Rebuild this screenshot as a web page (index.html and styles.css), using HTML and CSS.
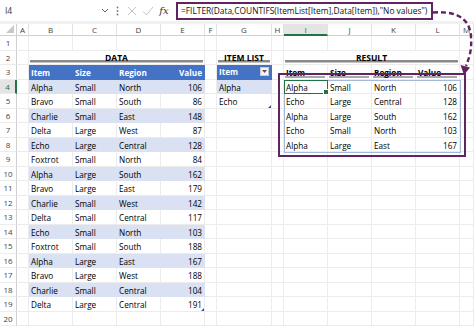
FILE: index.html
```html
<!DOCTYPE html>
<html>
<head>
<meta charset="utf-8">
<link rel="stylesheet" href="styles.css">
</head>
<body>
<div class="fbar">
  <div class="namebox">I4</div>
  <div class="ico chev"><svg width="8" height="5" viewBox="0 0 8 5"><path d="M1 1l3 3 3-3" fill="none" stroke="#666" stroke-width="1"/></svg></div>
  <div class="ico dots"><svg width="3" height="10" viewBox="0 0 3 10"><circle cx="1.5" cy="1.5" r="0.9" fill="#777"/><circle cx="1.5" cy="5" r="0.9" fill="#777"/><circle cx="1.5" cy="8.5" r="0.9" fill="#777"/></svg></div>
  <div class="ico"><svg width="10" height="10" viewBox="0 0 10 10"><path d="M1 1l8 8M9 1l-8 8" fill="none" stroke="#c4c4c4" stroke-width="1"/></svg></div>
  <div class="ico"><svg width="12" height="10" viewBox="0 0 12 10"><path d="M1 5.5l3.5 3.5L11 1" fill="none" stroke="#c4c4c4" stroke-width="1"/></svg></div>
  <div class="ico fx">fx</div>
  <div class="formula">=FILTER(Data,COUNTIFS(ItemList[Item],Data[Item]),"No values")</div>
</div>

<div class="sheet">
  <div class="corner"><span class="tri"></span></div><div class="ch">A</div><div class="ch">B</div><div class="ch">C</div><div class="ch">D</div><div class="ch">E</div><div class="ch">F</div><div class="ch">G</div><div class="ch">H</div><div class="ch sel">I</div><div class="ch">J</div><div class="ch">K</div><div class="ch">L</div><div class="ch">M</div>

  <div class="rh">1</div><div class="c"></div><div class="c"></div><div class="c"></div><div class="c"></div><div class="c"></div><div class="c"></div><div class="c"></div><div class="c"></div><div class="c"></div><div class="c"></div><div class="c"></div><div class="c"></div><div class="c"></div>

  <div class="rh">2</div><div class="c"></div><div class="c title span4">DATA</div><div class="c"></div><div class="c title">ITEM LIST</div><div class="c"></div><div class="c title span4">RESULT</div><div class="c"></div>

  <div class="rh">3</div><div class="c"></div><div class="c th">Item</div><div class="c th">Size</div><div class="c th">Region</div><div class="c th num">Value</div><div class="c"></div><div class="c th drop">Item<span class="dd"><svg width="5" height="3" viewBox="0 0 5 3"><path d="M0 0h5L2.5 3z" fill="#555"/></svg></span></div><div class="c"></div><div class="c rth">Item</div><div class="c rth">Size</div><div class="c rth">Region</div><div class="c rth">Value</div><div class="c"></div>

  <div class="rh sel">4</div><div class="c"></div><div class="c band">Alpha</div><div class="c band">Small</div><div class="c band">North</div><div class="c band num">106</div><div class="c"></div><div class="c band">Alpha</div><div class="c"></div><div class="c active">Alpha</div><div class="c">Small</div><div class="c">North</div><div class="c num">106</div><div class="c"></div>

  <div class="rh">5</div><div class="c"></div><div class="c">Bravo</div><div class="c">Small</div><div class="c">South</div><div class="c num">86</div><div class="c"></div><div class="c handle">Echo</div><div class="c"></div><div class="c">Echo</div><div class="c">Large</div><div class="c">Central</div><div class="c num">128</div><div class="c"></div>

  <div class="rh">6</div><div class="c"></div><div class="c band">Charlie</div><div class="c band">Small</div><div class="c band">East</div><div class="c band num">148</div><div class="c"></div><div class="c"></div><div class="c"></div><div class="c">Alpha</div><div class="c">Large</div><div class="c">South</div><div class="c num">162</div><div class="c"></div>

  <div class="rh">7</div><div class="c"></div><div class="c">Delta</div><div class="c">Large</div><div class="c">West</div><div class="c num">87</div><div class="c"></div><div class="c"></div><div class="c"></div><div class="c">Echo</div><div class="c">Small</div><div class="c">North</div><div class="c num">103</div><div class="c"></div>

  <div class="rh">8</div><div class="c"></div><div class="c band">Echo</div><div class="c band">Large</div><div class="c band">Central</div><div class="c band num">128</div><div class="c"></div><div class="c"></div><div class="c"></div><div class="c">Alpha</div><div class="c">Large</div><div class="c">East</div><div class="c num">167</div><div class="c"></div>

  <div class="rh">9</div><div class="c"></div><div class="c">Foxtrot</div><div class="c">Small</div><div class="c">North</div><div class="c num">84</div><div class="c"></div><div class="c"></div><div class="c"></div><div class="c"></div><div class="c"></div><div class="c"></div><div class="c"></div><div class="c"></div>

  <div class="rh">10</div><div class="c"></div><div class="c band">Alpha</div><div class="c band">Large</div><div class="c band">South</div><div class="c band num">162</div><div class="c"></div><div class="c"></div><div class="c"></div><div class="c"></div><div class="c"></div><div class="c"></div><div class="c"></div><div class="c"></div>

  <div class="rh">11</div><div class="c"></div><div class="c">Bravo</div><div class="c">Large</div><div class="c">East</div><div class="c num">179</div><div class="c"></div><div class="c"></div><div class="c"></div><div class="c"></div><div class="c"></div><div class="c"></div><div class="c"></div><div class="c"></div>

  <div class="rh">12</div><div class="c"></div><div class="c band">Charlie</div><div class="c band">Small</div><div class="c band">West</div><div class="c band num">142</div><div class="c"></div><div class="c"></div><div class="c"></div><div class="c"></div><div class="c"></div><div class="c"></div><div class="c"></div><div class="c"></div>

  <div class="rh">13</div><div class="c"></div><div class="c">Delta</div><div class="c">Small</div><div class="c">Central</div><div class="c num">117</div><div class="c"></div><div class="c"></div><div class="c"></div><div class="c"></div><div class="c"></div><div class="c"></div><div class="c"></div><div class="c"></div>

  <div class="rh">14</div><div class="c"></div><div class="c band">Echo</div><div class="c band">Small</div><div class="c band">North</div><div class="c band num">103</div><div class="c"></div><div class="c"></div><div class="c"></div><div class="c"></div><div class="c"></div><div class="c"></div><div class="c"></div><div class="c"></div>

  <div class="rh">15</div><div class="c"></div><div class="c">Foxtrot</div><div class="c">Small</div><div class="c">South</div><div class="c num">188</div><div class="c"></div><div class="c"></div><div class="c"></div><div class="c"></div><div class="c"></div><div class="c"></div><div class="c"></div><div class="c"></div>

  <div class="rh">16</div><div class="c"></div><div class="c band">Alpha</div><div class="c band">Large</div><div class="c band">East</div><div class="c band num">167</div><div class="c"></div><div class="c"></div><div class="c"></div><div class="c"></div><div class="c"></div><div class="c"></div><div class="c"></div><div class="c"></div>

  <div class="rh">17</div><div class="c"></div><div class="c">Bravo</div><div class="c">Large</div><div class="c">West</div><div class="c num">188</div><div class="c"></div><div class="c"></div><div class="c"></div><div class="c"></div><div class="c"></div><div class="c"></div><div class="c"></div><div class="c"></div>

  <div class="rh">18</div><div class="c"></div><div class="c band">Charlie</div><div class="c band">Small</div><div class="c band">Central</div><div class="c band num">104</div><div class="c"></div><div class="c"></div><div class="c"></div><div class="c"></div><div class="c"></div><div class="c"></div><div class="c"></div><div class="c"></div>

  <div class="rh">19</div><div class="c"></div><div class="c">Delta</div><div class="c">Large</div><div class="c">Central</div><div class="c num handle">191</div><div class="c"></div><div class="c"></div><div class="c"></div><div class="c"></div><div class="c"></div><div class="c"></div><div class="c"></div><div class="c"></div>

  <div class="rh">20</div><div class="c"></div><div class="c"></div><div class="c"></div><div class="c"></div><div class="c"></div><div class="c"></div><div class="c"></div><div class="c"></div><div class="c"></div><div class="c"></div><div class="c"></div><div class="c"></div><div class="c"></div>

  <div class="spill"></div>
  <div class="resultbox"></div>
</div>

<svg class="arrow" width="474" height="326" viewBox="0 0 474 326">
  <path d="M433 12.5 C453 11 470 16 471 37 C472 51 469 58 466 66" fill="none" stroke="#612463" stroke-width="2.4" stroke-dasharray="5 3"/>
  <path d="M460.5 65 L470 67.5 L464 75 Z" fill="#612463"/>
</svg>
</body>
</html>
```

FILE: styles.css
```css
* { box-sizing: border-box; margin: 0; padding: 0; }
html, body { width: 474px; height: 326px; overflow: hidden; background: #fff; }
body {
  font-family: "Open Sans", "Noto Sans", sans-serif;
  font-size: 8.2px;
  color: #000;
  position: relative;
}

/* formula bar */
.fbar {
  height: 24px;
  display: flex;
  align-items: center;
  background: #fff;
  border-bottom: 3px solid #f1f1f1;
}
.namebox {
  width: 100px;
  padding-left: 5px;
  font-size: 8.5px;
  color: #333;
}
.ico {
  width: 16px;
  display: flex;
  justify-content: center;
  align-items: center;
}
.ico.chev { width: 10px; }
.ico.dots { width: 14px; }
.ico.fx {
  font-family: "DejaVu Serif", "Liberation Serif", serif;
  font-style: italic;
  font-size: 10px;
  color: #333;
  margin-top: -1px;
}
.formula {
  margin-left: 4px;
  width: 257px;
  height: 18px;
  border: 2.5px solid #612463;
  padding-left: 3px;
  line-height: 13px;
  white-space: nowrap;
  font-size: 8.4px;
  color: #111;
}

/* sheet grid */
.sheet {
  position: relative;
  display: grid;
  grid-template-columns: 17px 12px 44px 44px 44px 44px 12px 55px 12px 44px 44px 44px 44px 1fr;
  grid-template-rows: 12px repeat(20, 14.5px);
}
.corner {
  position: relative;
  border-right: 1px solid #d0d0d0;
  border-bottom: 1px solid #d0d0d0;
}
.corner .tri {
  position: absolute;
  right: 2px;
  bottom: 2px;
  width: 0;
  height: 0;
  border-left: 8px solid transparent;
  border-bottom: 8px solid #c8c8c8;
}
.ch {
  text-align: center;
  font-size: 8px;
  line-height: 11px;
  color: #444;
  border-right: 1px solid #e2e2e2;
  border-bottom: 1px solid #d0d0d0;
}
.ch.sel {
  background: #e4e4e4;
  color: #217346;
  border-bottom: 2px solid #217346;
}
.rh {
  text-align: center;
  font-size: 8px;
  line-height: 14px;
  color: #444;
  border-right: 1px solid #d0d0d0;
  border-bottom: 1px solid #ececec;
}
.rh.sel {
  background: #e4e4e4;
  color: #217346;
  border-right: 2px solid #217346;
}
.c {
  position: relative;
  border-right: 1px solid #ececec;
  border-bottom: 1px solid #ececec;
  padding: 1px 2px 0 2px;
  line-height: 13px;
  white-space: nowrap;
  overflow: visible;
}
.num { text-align: right; }
.band { background: #d9e1f2; border-color: transparent; }
.th {
  background: #4472c4;
  border-color: transparent;
  color: #fff;
  font-weight: 700;
}
.drop {
  display: flex;
  justify-content: space-between;
  align-items: center;
  padding-top: 0;
}
.dd {
  width: 9px;
  height: 9px;
  background: #f4f4f4;
  border: 1px solid #c9c9c9;
  display: flex;
  align-items: center;
  justify-content: center;
}
.title {
  text-align: center;
  font-weight: 700;
  font-size: 8.5px;
  line-height: 12px;
  padding-top: 1px;
  background: linear-gradient(#8a8a8a, #8a8a8a) no-repeat left 1px bottom 1.5px / calc(100% - 2px) 2.5px;
}
.span4 { grid-column: span 4; }
.rth {
  font-weight: 700;
  background: linear-gradient(#a8a8a8, #a8a8a8) no-repeat left 1px bottom 1px / calc(100% - 3px) 2px;
}
.active {
  outline: 1.5px solid #217346;
  outline-offset: -1px;
  z-index: 2;
}
.active::after {
  content: "";
  position: absolute;
  right: -2px;
  bottom: -2px;
  width: 4px;
  height: 4px;
  background: #217346;
  border: 1px solid #fff;
}
.handle::after {
  content: "";
  position: absolute;
  right: 0;
  bottom: 0;
  width: 0;
  height: 0;
  border-left: 3px solid transparent;
  border-bottom: 3px solid #2f5597;
}

/* overlays */
.spill {
  position: absolute;
  left: 284px;
  top: 55.5px;
  width: 176.5px;
  height: 73px;
  border: 1px solid #a4b8dc;
  pointer-events: none;
}
.resultbox {
  position: absolute;
  left: 278px;
  top: 49px;
  width: 188px;
  height: 84px;
  border: 2.5px solid #612463;
  pointer-events: none;
  z-index: 3;
}
.arrow {
  position: absolute;
  left: 0;
  top: 0;
  pointer-events: none;
}
```
